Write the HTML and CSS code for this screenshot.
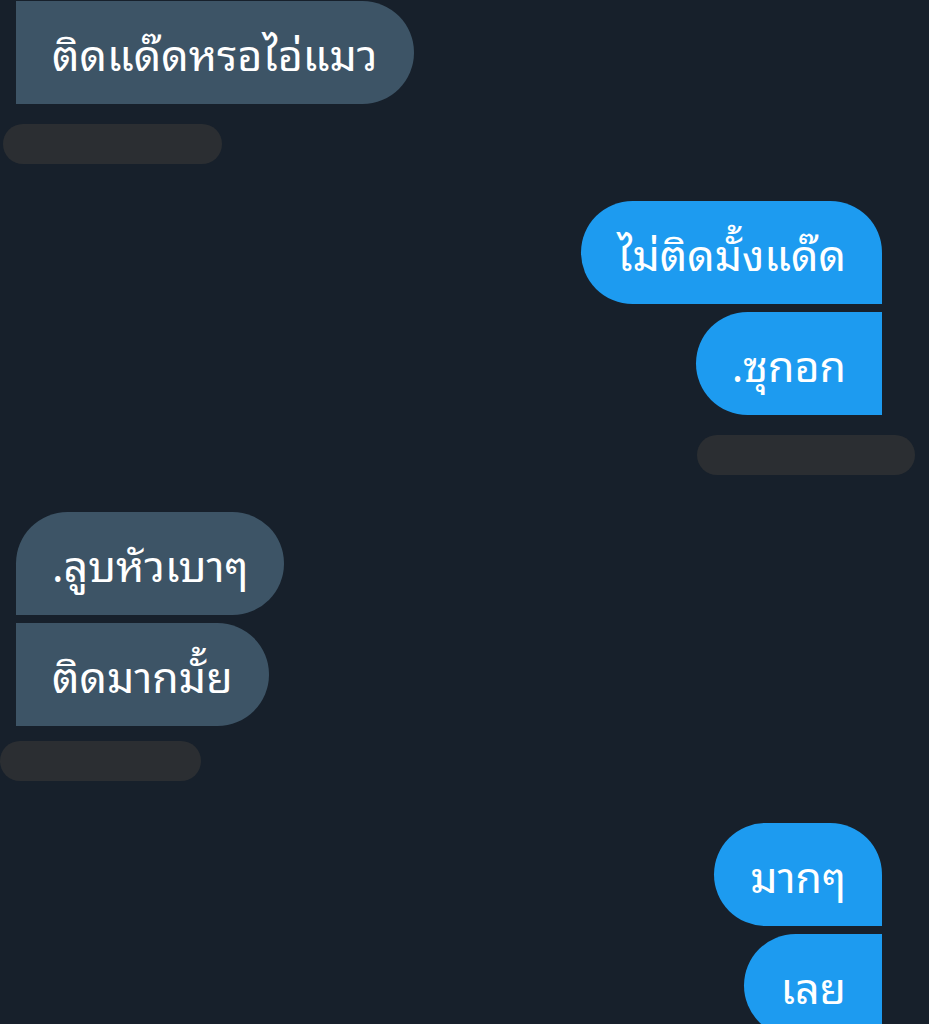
FILE: index.html
```html
<!DOCTYPE html>
<html lang="th">
<head>
  <meta charset="UTF-8" />
  <meta name="viewport" content="width=device-width, initial-scale=1.0"/>
  <title>Messages</title>
  <link rel="stylesheet" href="styles.css">
</head>
<body>

  <div class="chat">

    <!-- received -->
    <div class="group in">
      <div class="bubble last-only">ติดแด๊ดหรอไอ่แมว</div>
      <div class="meta"></div>
    </div>

    <!-- sent -->
    <div class="group out">
      <div class="bubble first">ไม่ติดมั้งแด๊ด</div>
      <div class="bubble last">.ซุกอก</div>
      <div class="meta"></div>
    </div>

    <!-- received -->
    <div class="group in">
      <div class="bubble first">.ลูบหัวเบาๆ</div>
      <div class="bubble last">ติดมากมั้ย</div>
      <div class="meta tight"></div>
    </div>

    <!-- sent -->
    <div class="group out">
      <div class="bubble first">มากๆ</div>
      <div class="bubble last">เลย</div>
    </div>

  </div>

</body>
</html>
```

FILE: styles.css
```css
:root {
  --bg: #17202b;
  --in: #3d5466;
  --out: #1d9bf0;
  --meta: #2b2e32;
  --text: #ffffff;
}

body {
  margin: 0;
  background: var(--bg);
  color: var(--text);
  font-family: "Noto Sans Thai Looped", Loma, Garuda, Tahoma, "Noto Sans Thai", "Noto Sans", sans-serif;
  overflow: hidden;
}

.chat {
  display: flex;
  flex-direction: column;
  padding: 1px 47px 0 16px;
}

.group {
  display: flex;
  flex-direction: column;
  gap: 8px;
  margin-bottom: 37px;
}

.group.in {
  align-items: flex-start;
}

.group.out {
  align-items: flex-end;
}

.bubble {
  height: 103px;
  box-sizing: border-box;
  padding: 0 36px 3px;
  display: flex;
  align-items: center;
  font-size: 43px;
  line-height: 1;
  white-space: nowrap;
}

.in .bubble {
  background: var(--in);
}

.out .bubble {
  background: var(--out);
}

/* grouped corners */
.in .last-only { border-radius: 0 52px 52px 0; }
.in .first { border-radius: 52px 52px 52px 0; }
.in .last { border-radius: 0 52px 52px 0; }

.out .first { border-radius: 52px 52px 0 52px; }
.out .last { border-radius: 52px 0 0 52px; }

.meta {
  height: 40px;
  border-radius: 20px;
  background: var(--meta);
  margin-top: 12px;
}

.in .meta {
  width: 219px;
  margin-left: -13px;
}

.out .meta {
  width: 218px;
  margin-right: -33px;
}

.in .meta.tight {
  width: 201px;
  margin-left: -16px;
  margin-top: 7px;
  margin-bottom: 5px;
}
```
